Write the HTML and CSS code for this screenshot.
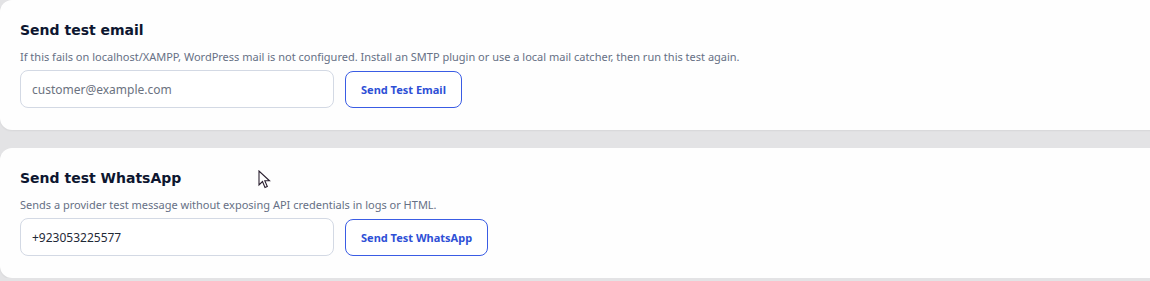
FILE: index.html
```html
<!DOCTYPE html>
<html lang="en">
<head>
<meta charset="utf-8">
<title>Test tools</title>
<link rel="stylesheet" href="styles.css">
</head>
<body>
<main class="page">
  <section class="card">
    <h2 class="card-title">Send test email</h2>
    <p class="card-desc">If this fails on localhost/XAMPP, WordPress mail is not configured. Install an SMTP plugin or use a local mail catcher, then run this test again.</p>
    <div class="row">
      <input class="field" type="email" placeholder="customer@example.com">
      <button class="btn" type="button">Send Test Email</button>
    </div>
  </section>
  <section class="card">
    <h2 class="card-title">Send test WhatsApp</h2>
    <p class="card-desc">Sends a provider test message without exposing API credentials in logs or HTML.</p>
    <div class="row">
      <input class="field" type="text" value="+923053225577">
      <button class="btn" type="button">Send Test WhatsApp</button>
    </div>
  </section>
</main>
<svg class="cursor" width="14" height="20" viewBox="0 0 14 20" aria-hidden="true">
  <path d="M1 1 L1 15 L4.5 11.5 L7 17.5 L9.3 16.5 L6.8 10.8 L11.5 10.8 Z" fill="#fff" stroke="#2a2030" stroke-width="1.1" stroke-linejoin="miter"/>
</svg>
</body>
</html>
```

FILE: styles.css
```css
* { box-sizing: border-box; }

html, body {
  margin: 0;
  padding: 0;
  background: #e3e3e5;
  overflow: hidden;
}

body {
  position: relative;
  font-family: "Noto Sans", "Open Sans", sans-serif;
  color: #0f172a;
}

.page {
  display: flex;
  flex-direction: column;
  gap: 18px;
  width: 1180px;
}

.card {
  background: #fefefe;
  border-radius: 12px;
  padding: 20px 20px 22px;
  height: 130px;
  box-shadow: 0 1px 2px rgba(0, 0, 0, 0.06);
}

.card-title {
  margin: 0;
  font-family: "DejaVu Sans", sans-serif;
  font-weight: 700;
  font-size: 14px;
  line-height: 20px;
  color: #0d1630;
}

.card-desc {
  margin: 9px 0 5px;
  font-size: 11px;
  line-height: 16px;
  color: #667085;
}

.row {
  display: flex;
  align-items: center;
  gap: 11px;
}

.field {
  width: 314px;
  height: 38px;
  padding: 0 11px;
  border: 1px solid #d3d9e4;
  border-radius: 8px;
  background: #fff;
  font-family: "Noto Sans", sans-serif;
  font-size: 12px;
  color: #1f2937;
  outline: none;
}

.field::placeholder {
  color: #6b7280;
}

.btn {
  height: 37px;
  padding: 0 15px;
  border: 1px solid #3a5ce4;
  border-radius: 8px;
  background: #fff;
  color: #2e4fd6;
  font-family: "Noto Sans", sans-serif;
  font-weight: 700;
  font-size: 11px;
  cursor: pointer;
}

.cursor {
  position: absolute;
  left: 258px;
  top: 170px;
}
```
